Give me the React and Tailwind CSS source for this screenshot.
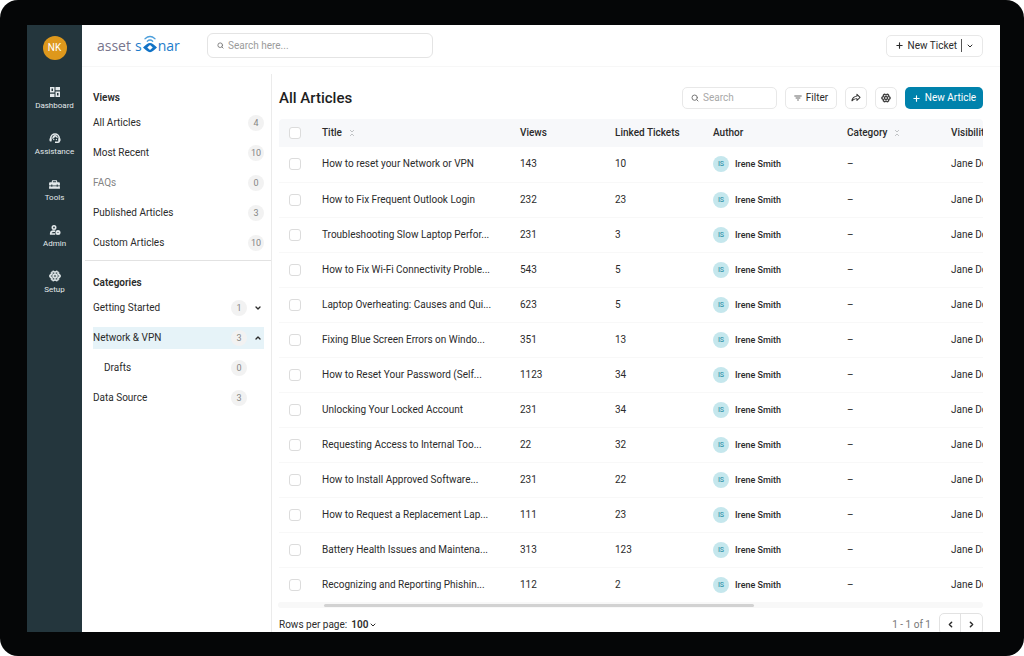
import React from "react";
import { ChevronDown, ChevronUp, ChevronLeft, ChevronRight, Plus, Search, ChevronsDownUp } from "lucide-react";
import { MdHomeRepairService } from "react-icons/md";
import { PiShareFatBold, PiGearSixBold } from "react-icons/pi";

function DashboardIcon({ className }) {
  return (
    <svg viewBox="0 0 24 24" className={className} fill="none" stroke="currentColor" strokeWidth="3" aria-hidden="true">
      <path d="M3.500 3.500h6v8h-6zM14.500 12.500h6v8h-6z" />
      <path d="M13 2h9v6.500h-9zM2 15.500h9V22H2z" fill="currentColor" stroke="none" />
    </svg>
  );
}

function HeadsetIcon({ className }) {
  return (
    <svg viewBox="0 0 24 24" className={className} fill="none" stroke="currentColor" aria-hidden="true">
      <path d="M3.500 17v-4.500a8.500 8.500 0 0 1 17 0V18q0 2.500-2.500 2.500h-6" strokeWidth="3.200" />
      <path d="M1 13h4v6H3a2 2 0 0 1-2-2zM19 13h4v4a2 2 0 0 1-2 2h-2z" fill="currentColor" stroke="none" />
      <path d="M6.500 14c3.200-.8 5-3 5.700-5.500 1.200 2 3 3.200 5.600 3.300C17.300 8.500 15 6 12 6s-5.800 3-5.500 8z" fill="currentColor" stroke="none" />
      <circle cx="9.500" cy="15" r="1.300" fill="currentColor" stroke="none" />
      <circle cx="14.800" cy="15" r="1.300" fill="currentColor" stroke="none" />
    </svg>
  );
}

function AdminIcon({ className }) {
  return (
    <svg viewBox="0 0 24 24" className={className} fill="none" stroke="currentColor" aria-hidden="true">
      <circle cx="10" cy="7" r="3.400" strokeWidth="3.200" />
      <path d="M12.500 14.500c-4.500-1.200-9 .5-9 4V20h9" strokeWidth="3.400" />
      <circle cx="18" cy="17" r="5" fill="currentColor" stroke="none" />
      <circle cx="18" cy="17" r="1.200" className="fill-[#24363d]" stroke="none" />
    </svg>
  );
}

function FilterIcon({ className }) {
  return (
    <svg viewBox="0 0 24 24" className={className} fill="none" stroke="currentColor" strokeWidth="3.600" aria-hidden="true">
      <path d="M1 6h22M5 12h14M9.500 18h5" />
    </svg>
  );
}

const NAV = [
  { label: "Dashboard", Icon: DashboardIcon, size: "size-3" },
  { label: "Assistance", Icon: HeadsetIcon, size: "size-3" },
  { label: "Tools", Icon: MdHomeRepairService, size: "size-[13px]" },
  { label: "Admin", Icon: AdminIcon, size: "size-3" },
  { label: "Setup", Icon: PiGearSixBold, size: "size-3 stroke-[16]" },
];

const VIEWS = [
  ["All Articles", 4],
  ["Most Recent", 10],
  ["FAQs", 0],
  ["Published Articles", 3],
  ["Custom Articles", 10],
];

const ARTICLES = [
  ["How to reset your Network or VPN", 143, 10],
  ["How to Fix Frequent Outlook Login", 232, 23],
  ["Troubleshooting Slow Laptop Perfor...", 231, 3],
  ["How to Fix Wi-Fi Connectivity Proble...", 543, 5],
  ["Laptop Overheating: Causes and Qui...", 623, 5],
  ["Fixing Blue Screen Errors on Windo...", 351, 13],
  ["How to Reset Your Password (Self...", 1123, 34],
  ["Unlocking Your Locked Account", 231, 34],
  ["Requesting Access to Internal Too...", 22, 32],
  ["How to Install Approved Software...", 231, 22],
  ["How to Request a Replacement Lap...", 111, 23],
  ["Battery Health Issues and Maintena...", 313, 123],
  ["Recognizing and Reporting Phishin...", 112, 2],
];

function Logo() {
  return (
    <a href="#home" aria-label="assetsonar" className="flex w-[110px] items-center font-['Open_Sans',sans-serif] text-[14px] leading-5 text-[#1c7ccb]">
      <span className="text-[#77758c]">asset</span>
      <span className="ml-1">s</span>
      <svg viewBox="0 0 28 36" className="mx-px mb-1 h-[18px] w-[14px]" fill="none" aria-hidden="true">
        <path d="M4 7.500Q14-1.500 24 7.500" stroke="#4b9edb" strokeWidth="2.400" strokeLinecap="round" />
        <path d="M8.500 12.500Q14 7.500 19.500 12.500" stroke="#4b9edb" strokeWidth="2.400" strokeLinecap="round" />
        <path d="M0 25Q5 20.500 7.500 18.500Q14 13 20.500 18.500Q23 20.500 28 25Q23 29.500 20.500 31.500Q14 37 7.500 31.500Q5 29.500 0 25z" fill="#1273c6" />
        <path d="M14 20l5.500 5-5.500 5-5.500-5z" fill="#fff" />
      </svg>
      <span>nar</span>
    </a>
  );
}

function Count({ children }) {
  return (
    <span className="flex size-4 shrink-0 items-center justify-center rounded-full bg-[#f2f2f2] text-[9px] text-[#858585]">
      {children}
    </span>
  );
}

function CategoryRow({ label, count, open, active, nested }) {
  const Arrow = open ? ChevronUp : ChevronDown;
  return (
    <li className="flex h-[30px] items-center">
      <a
        href={"#" + label}
        className={
          "flex h-[22px] flex-1 items-center justify-between " +
          (active ? "bg-[#e6f3f8] " : "") +
          (nested ? "pl-[11px]" : "")
        }
      >
        {label}
        <span className="flex items-center gap-[7px]">
          <Count>{count}</Count>
          <span className="flex w-[10px] justify-start">
            {open !== undefined && <Arrow className="size-2" strokeWidth={4} />}
          </span>
        </span>
      </a>
    </li>
  );
}

function Checkbox({ label }) {
  return (
    <input
      type="checkbox"
      aria-label={label}
      className="ml-[10px] block size-3 appearance-none rounded-[3px] border border-[#dcdcdc] bg-white checked:bg-[#0082ac]"
    />
  );
}

const SortIcon = () => <ChevronsDownUp className="size-2 text-[#a5a8ab]" strokeWidth={2} />;

const button = "flex h-[22px] items-center justify-center rounded-[5px] border border-[#e8e8e8] bg-white";

export default function App() {
  return (
    <div className="h-screen bg-white font-[Roboto,sans-serif] text-[10px] leading-3 text-[#2b2b2b]">
      <div className="h-full rounded-[18px] bg-[#050607] pt-[25px] pr-6 pb-6 pl-[27px]">
        <div className="flex h-full overflow-hidden bg-white">
          <nav aria-label="Main" className="flex w-[55px] shrink-0 flex-col items-center bg-[#24363d] pt-[11px] text-white">
            <button className="flex size-6 items-center justify-center rounded-full bg-[#de981c] text-[10px]">NK</button>
            <ul className="mt-[26px] flex flex-col gap-[21px]">
              {NAV.map(({ label, Icon, size }) => (
                <li key={label}>
                  <a href={"#" + label} className="flex h-[25px] flex-col items-center justify-between text-[8px] leading-[10px] text-[#e3e9eb]">
                    <Icon className={size} />
                    {label}
                  </a>
                </li>
              ))}
            </ul>
          </nav>

          <div className="flex min-w-0 flex-1 flex-col">
            <header className="flex h-[42px] shrink-0 items-center border-b border-[#f7f7f7] pr-[17px] pl-[15px]">
              <Logo />
              <label className="flex h-[25px] w-[226px] items-center gap-1 rounded-[6px] border border-[#e4e4e4] px-[9px]">
                <Search className="size-[7px] text-[#777]" strokeWidth={3} />
                <input type="search" aria-label="Search" placeholder="Search here..." className="min-w-0 flex-1 outline-none placeholder:text-[#9b9b9b]" />
              </label>
              <div className="ml-auto flex h-[22px] items-center rounded-[5px] border border-[#e8e8e8]">
                <button className="flex items-center gap-1 pr-1 pl-2">
                  <Plus className="size-[9px]" strokeWidth={3} />
                  New Ticket
                </button>
                <button aria-label="More ticket options" className="flex h-[13px] items-center border-l border-[#555] pr-2 pl-1">
                  <ChevronDown className="size-2" strokeWidth={3} />
                </button>
              </div>
            </header>

            <div className="flex min-h-0 flex-1">
              <aside className="mt-[7px] w-[190px] shrink-0 border-r border-[#ebebeb] text-[10px]">
                <section className="pt-[18px] pr-[7px] pb-[2px] pl-[11px]">
                  <h2 className="mb-1 font-semibold">Views</h2>
                  <ul>
                    {VIEWS.map(([label, count]) => (
                      <li key={label} className="flex h-[30px] items-center">
                        <a href={"#" + label} className={"flex flex-1 items-center justify-between " + (label === "FAQs" ? "text-[#858585]" : "")}>
                          {label}
                          <Count>{count}</Count>
                        </a>
                      </li>
                    ))}
                  </ul>
                </section>
                <section className="ml-[3px] border-t border-[#e2e2e2] pt-4 pr-[7px] pl-2">
                  <h2 className="mb-1 font-semibold">Categories</h2>
                  <ul>
                    <CategoryRow label="Getting Started" count={1} open={false} />
                    <CategoryRow label="Network & VPN" count={3} open={true} active />
                    <CategoryRow label="Drafts" count={0} nested />
                    <CategoryRow label="Data Source" count={3} />
                  </ul>
                </section>
              </aside>

              <main className="flex min-w-0 flex-1 flex-col pt-5 pr-[17px] pl-[7px]">
                <div className="flex items-center gap-2">
                  <h1 className="mr-auto text-[15px] leading-5 font-medium text-[#1e1e1e]">All Articles</h1>
                  <label className="flex h-[22px] w-[95px] items-center gap-1 rounded-[5px] border border-[#e8e8e8] px-2">
                    <Search className="size-2 shrink-0 text-[#777]" strokeWidth={3} />
                    <input type="search" aria-label="Search articles" placeholder="Search" className="min-w-0 flex-1 outline-none placeholder:text-[#a8a8a8]" />
                  </label>
                  <button className={button + " w-[52px] gap-1"}>
                    <FilterIcon className="size-2 text-[#666]" />
                    Filter
                  </button>
                  <button aria-label="Share" className={button + " w-[22px]"}>
                    <PiShareFatBold className="size-[10px]" />
                  </button>
                  <button aria-label="Settings" className={button + " w-[22px]"}>
                    <PiGearSixBold className="size-[10px] stroke-[8]" />
                  </button>
                  <button className="flex h-[22px] w-[78px] items-center justify-center gap-1 rounded-[5px] bg-[#0082ac] text-white">
                    <Plus className="size-[9px]" strokeWidth={3} />
                    New Article
                  </button>
                </div>

                <div className="mt-[10px] shrink-0 overflow-hidden rounded-t-[4px]">
                  <table className="w-[822px] table-fixed text-left">
                    <thead>
                      <tr className="h-7 bg-[#f7f8fa] [&>th]:font-medium">
                        <th className="w-[43px]"><Checkbox label="Select all articles" /></th>
                        <th className="w-[198px]"><span className="flex items-center gap-[6px]">Title <SortIcon /></span></th>
                        <th className="w-[95px]">Views</th>
                        <th className="w-[98px]">Linked Tickets</th>
                        <th className="w-[134px]">Author</th>
                        <th className="w-[104px]"><span className="flex items-center gap-[6px]">Category <SortIcon /></span></th>
                        <th>Visibility</th>
                      </tr>
                    </thead>
                    <tbody>
                      {ARTICLES.map(([title, views, linked]) => (
                        <tr key={title} className="h-[35px] border-b border-[#f8f8f8] last:border-0">
                          <td><Checkbox label={"Select " + title} /></td>
                          <td className="whitespace-nowrap">{title}</td>
                          <td>{views}</td>
                          <td>{linked}</td>
                          <td>
                            <span className="flex items-center gap-[6px] text-[9px] font-medium">
                              <span className="flex size-4 items-center justify-center rounded-full bg-[#c5e7ed] text-[7px] text-[#3796ab]">IS</span>
                              Irene Smith
                            </span>
                          </td>
                          <td>–</td>
                          <td>Jane Doe</td>
                        </tr>
                      ))}
                    </tbody>
                  </table>
                </div>

                <div className="-ml-px flex h-[6px] shrink-0 items-center rounded-full bg-[#f8f8f8]">
                  <div className="ml-[46px] h-[3px] w-[61%] rounded-full bg-[#d2d2d2]" />
                </div>

                <footer className="mt-[5px] flex items-start">
                  <label className="mt-[6px] flex items-center gap-1">
                    Rows per page:
                    <span className="flex items-center">
                      <select defaultValue="100" className="appearance-none font-semibold outline-none">
                        <option>100</option>
                      </select>
                      <ChevronDown className="size-2" strokeWidth={3} />
                    </span>
                  </label>
                  <span className="mt-[6px] mr-2 ml-auto text-[#777]">1 - 1 of 1</span>
                  <div className="flex h-[22px] divide-x divide-[#e2e2e2] rounded-[5px] border border-[#e2e2e2]">
                    <button aria-label="Previous page" className="flex w-[21px] items-center justify-center">
                      <ChevronLeft className="size-[9px]" strokeWidth={4} />
                    </button>
                    <button aria-label="Next page" className="flex w-[21px] items-center justify-center">
                      <ChevronRight className="size-[9px]" strokeWidth={4} />
                    </button>
                  </div>
                </footer>
              </main>
            </div>
          </div>
        </div>
      </div>
    </div>
  );
}
